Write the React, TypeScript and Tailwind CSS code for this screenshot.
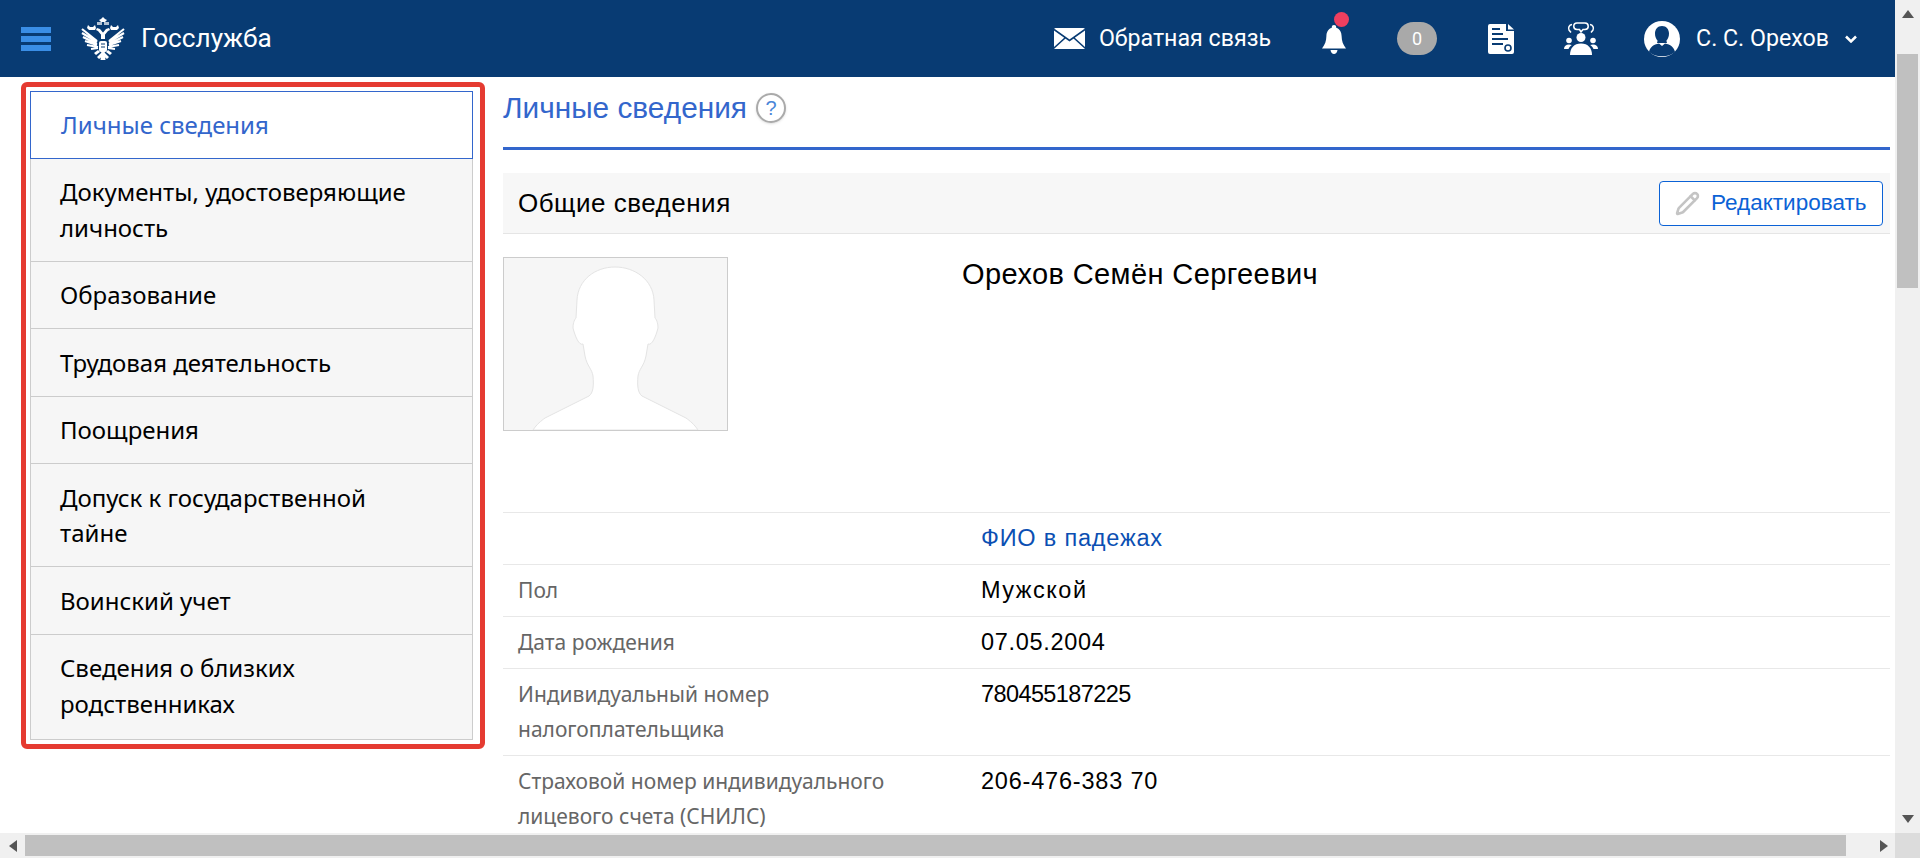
import { Pencil } from 'lucide-react'

const menu = [
  'Личные сведения',
  'Документы, удостоверяющие личность',
  'Образование',
  'Трудовая деятельность',
  'Поощрения',
  'Допуск к государственной тайне',
  'Воинский учет',
  'Сведения о близких родственниках',
]

const rows = [
  { label: 'Пол', value: 'Мужской', track: 'tracking-[1.5px]' },
  { label: 'Дата рождения', value: '07.05.2004', track: 'tracking-[0.7px]' },
  { label: 'Индивидуальный номер налогоплательщика', value: '780455187225', track: 'tracking-[-0.6px]' },
  { label: 'Страховой номер индивидуального лицевого счета (СНИЛС)', value: '206-476-383 70', track: 'tracking-[0.8px]' },
]

function EagleHalf() {
  return (
    <g>
      <path d="M16 24L1 12M16 25L1 16M16 27L2 20M16 28L4 24M17 30L6 28M17 31L10 32" stroke="#fff" strokeWidth="2.2" fill="none" />
      <path d="M22 22v-2l-5-6-2-1 1-2 3 1 5 6v4z" fill="#fff" />
      <path d="M7 8l2 2h3l2-2 1 3-1 2H8l-2-2z" fill="#fff" />
      <path d="M16 5h5v3h-5z" fill="#fff" opacity="0.7" />
      <path d="M21 35l-5 5 2 2 4-3zM17 33l-4 3 2 2 4-3z" fill="#fff" />
    </g>
  )
}

function Eagle() {
  return (
    <svg width="44" height="44" viewBox="0 0 44 44">
      <EagleHalf />
      <g transform="translate(44 0) scale(-1 1)">
        <EagleHalf />
      </g>
      <path d="M20 5h4l2-2-2-1-2-2-2 2-2 1z" fill="#fff" />
      <rect x="18" y="24" width="8" height="11" rx="2" fill="#fff" />
      <path d="M20 27h4M20 30h4" stroke="#083b73" strokeWidth="1" />
      <path d="M20.5 35h3l1 8h-5z" fill="#fff" />
    </svg>
  )
}

function Envelope() {
  return (
    <svg width="31" height="21" viewBox="0 0 31 21">
      <rect width="31" height="21" rx="1.5" fill="#fff" />
      <path d="M0 1.5l15.5 11L31 1.5M0 20l11-10M31 20L20 10" stroke="#083b73" strokeWidth="1.6" fill="none" />
    </svg>
  )
}

function Bell() {
  return (
    <svg width="24" height="29" viewBox="0 0 24 29" fill="#fff">
      <path d="M12 0c1.4 0 2.2.9 2.2 2.2v.6C18 4 19.5 7.5 19.6 11c.1 5 1.4 8.5 4.4 12.5H0C3 19.5 4.300 16 4.400 11 4.500 7.500 6 4 9.800 2.800v-.6C9.800.9 10.600 0 12 0z" />
      <path d="M8.500 25h7c-.4 2.400-1.800 4-3.500 4s-3.100-1.600-3.500-4z" />
    </svg>
  )
}

function DocIcon() {
  return (
    <svg width="26" height="30" viewBox="0 0 26 30">
      <path d="M2 0h16v7h8v21a2 2 0 0 1-2 2H2a2 2 0 0 1-2-2V2a2 2 0 0 1 2-2z" fill="#fff" />
      <path d="M20 0l6 5.500h-6z" fill="#fff" />
      <path d="M4 5h8M4 10h11M4 15h16M4 20h11" stroke="#083b73" strokeWidth="1.800" />
      <circle cx="20" cy="24" r="3" fill="#fff" stroke="#083b73" strokeWidth="1.600" />
    </svg>
  )
}

function PeopleIcon() {
  return (
    <svg width="34" height="33" viewBox="0 0 34 33" fill="#fff">
      <circle cx="17" cy="15.500" r="4.500" />
      <path d="M6 33c0-7 4-11.500 11-11.500S28 26 28 33z" />
      <circle cx="5" cy="18.500" r="2.800" />
      <circle cx="29" cy="18.500" r="2.800" />
      <path d="M0 27c0-3 2-4.500 5-4.500 1 0 2 .2 2.800.6C6 24.500 5 26 4.500 27zM34 27c0-3-2-4.500-5-4.500-1 0-2 .2-2.800.6 1.800 1.400 2.800 2.900 3.300 3.900z" />
      <path d="M13 1h8a2.500 2.500 0 0 1 0 6.500h-2l-2 2.500-1.500-2.500H13A2.500 2.500 0 0 1 13 1z" fill="none" stroke="#fff" strokeWidth="1.500" />
      <path d="M8 2.500C5 3 4 6 5 8l2 2.500M26 2.500c3 .5 4 3.500 3 5.500l-2 2.500" fill="none" stroke="#fff" strokeWidth="1.500" />
    </svg>
  )
}

function AvatarIcon() {
  return (
    <svg width="36" height="36" viewBox="0 0 36 36">
      <circle cx="18" cy="18" r="18" fill="#fff" />
      <path d="M18 5c-4.500 0-7 3.500-7 7.500 0 3 1 5.500 2.600 7.300l-.6 2.200H23l-.6-2.200C24 18 25 15.500 25 12.500 25 8.500 22.500 5 18 5z" fill="#083b73" />
      <path d="M5 31c1-5 4.500-7.500 10-8.500l3 2.500 3-2.500c5.500 1 9 3.500 10 8.500-3 2.800-7.500 4.300-13 4.300S8 33.800 5 31z" fill="#083b73" />
    </svg>
  )
}

function Silhouette() {
  return (
    <svg width="223" height="172" viewBox="0 0 223 172" className="block">
      <path
        d="M29 172C33 166 37 163 41 160L85 138C89 135 90 128 89 118C88 111 83 108 81 98L79 86C75 88 71 78 69 70C69 64 71 61 72 60L73 42C74 22 91 9 111 9C131 9 149 22 150 42L151 60C152 61 154 64 154 70C152 78 148 88 144 86L142 98C140 108 135 111 134 118C133 128 134 135 138 138L182 160C186 163 190 166 194 172Z"
        fill="#fff"
        stroke="#e4e4e4"
      />
    </svg>
  )
}

function Arrow({ points }: { points: string }) {
  return (
    <svg width="12" height="12" viewBox="0 0 12 12" fill="#555">
      <polygon points={points} />
    </svg>
  )
}

export default function App() {
  return (
    <div className="flex h-[858px] w-[1920px] flex-col overflow-hidden bg-white font-['Liberation_Sans',sans-serif]">
      <div className="flex min-h-0 flex-1">
        <div className="min-w-0 flex-1 overflow-hidden">
          <header className="flex h-[77px] items-center bg-[#083b73] pl-[21px] pr-[38px] font-['Roboto',sans-serif] text-white">
            <div className="flex w-[30px] flex-col gap-[3px]">
              <div className="h-[6px] bg-[#3a8ee6]" />
              <div className="h-[6px] bg-[#3a8ee6]" />
              <div className="h-[6px] bg-[#3a8ee6]" />
            </div>
            <div className="ml-[30px]">
              <Eagle />
            </div>
            <span className="ml-4 text-[26.2px]">Госслужба</span>
            <div className="ml-auto flex items-center">
              <Envelope />
              <span className="ml-[14px] text-[23.2px]">Обратная связь</span>
              <div className="relative ml-[51px] mt-[1px]">
                <Bell />
                <span className="absolute left-[12px] top-[-13px] h-[15px] w-[15px] rounded-full bg-[#ee3f5f]" />
              </div>
              <span className="ml-[51px] flex h-[33px] w-[40px] items-center justify-center rounded-full bg-[#a9a9a9] text-[18px]">0</span>
              <div className="ml-[51px]">
                <DocIcon />
              </div>
              <div className="ml-[50px]">
                <PeopleIcon />
              </div>
              <div className="ml-[46px]">
                <AvatarIcon />
              </div>
              <span className="ml-4 text-[23.2px]">С. С. Орехов</span>
              <svg className="ml-4" width="12" height="8" viewBox="0 0 12 8" fill="none" stroke="#fff" strokeWidth="2.500">
                <path d="M1 1.500l5 5 5-5" />
              </svg>
            </div>
          </header>

          <main className="flex gap-[18px] pl-[21px] pr-[5px]">
            <div className="mt-[5px] h-fit w-[464px] shrink-0 rounded-[6px] border-[5px] border-[#e53b31] pb-1 pl-1 pr-[7px] pt-1">
              <div className="border border-[#ccc] bg-[#f6f6f6] font-['Noto_Sans',sans-serif] text-[24px] leading-[35.5px]">
                {menu.map((item, i) => (
                  <div
                    key={item}
                    className={
                      i === 0
                        ? 'm-[-1px] mb-0 border border-[#3366cc] bg-white py-[15px] pl-[30px] pr-[40px] text-[#3366cc]'
                        : 'border-b border-[#ccc] py-[15.5px] pl-[29px] pr-[40px] text-black last:border-b-0 last:pb-[18px]'
                    }
                  >
                    {item}
                  </div>
                ))}
              </div>
            </div>

            <div className="min-w-0 flex-1">
              <div className="mb-[23px] flex items-center gap-[9px] border-b-[3px] border-[#3366cc] pb-5 pt-3">
                <span className="text-[29.8px] leading-[38px] text-[#3366cc]">Личные сведения</span>
                <span className="flex h-[30px] w-[30px] items-center justify-center rounded-full border-2 border-[#aaa] bg-white text-[20px] font-normal text-[#4a86d8] shadow-sm">?</span>
              </div>

              <div className="flex h-[61px] items-center justify-between border-b border-[#e5e5e5] bg-[#f7f7f7] pl-[15px] pr-[7px]">
                <span className="text-[26px] tracking-[0.5px] text-black">Общие сведения</span>
                <button className="flex h-[45px] w-[224px] items-center rounded-[4px] border border-[#0b62d6] bg-white pl-[15px] text-[22.5px] text-[#0b62d6]">
                  <Pencil size={25} color="#c4c4c4" strokeWidth={2.5} />
                  <span className="ml-[11px]">Редактировать</span>
                </button>
              </div>

              <div className="mt-[23px] flex h-[256px] border-b border-[#e8e8e8]">
                <div className="h-[174px] w-[225px] border border-[#ccc] bg-[#f6f6f6]">
                  <Silhouette />
                </div>
                <div className="ml-[234px] mt-[-2px] text-[29px] leading-[38px] tracking-[0.4px] text-black">Орехов Семён Сергеевич</div>
              </div>

              <div className="grid grid-cols-[478px_1fr] border-b border-[#e8e8e8] py-[8px] text-[23.5px] leading-[35px] tracking-[0.8px]">
                <div />
                <a className="text-[#0b4fb3]">ФИО в падежах</a>
              </div>

              {rows.map(row => (
                <div key={row.label} className="grid grid-cols-[478px_1fr] border-b border-[#e8e8e8] py-[8px] leading-[35px]">
                  <div className="w-[400px] pl-[15px] font-['Noto_Sans',sans-serif] text-[21px] text-[#666]">{row.label}</div>
                  <div className={`text-[23.5px] text-black ${row.track}`}>{row.value}</div>
                </div>
              ))}
            </div>
          </main>
        </div>

        <div className="flex w-[25px] shrink-0 flex-col items-center bg-[#f0f0f0] pl-[2px] pr-[2px]">
          <div className="flex h-[54px] items-start pt-2">
            <Arrow points="6,2 12,10 0,10" />
          </div>
          <div className="h-[234px] w-[21px] bg-[#c0c0c0]" />
          <div className="mt-auto pb-2">
            <Arrow points="0,2 12,2 6,10" />
          </div>
        </div>
      </div>

      <div className="flex h-[25px] shrink-0 bg-[#f0f0f0]">
        <div className="flex w-[25px] items-center justify-center">
          <Arrow points="2,6 10,0 10,12" />
        </div>
        <div className="mt-[2px] h-[21px] w-[1821px] bg-[#c0c0c0]" />
        <div className="flex w-[49px] items-center justify-end pr-[5px]">
          <Arrow points="2,0 10,6 2,12" />
        </div>
        <div className="w-[25px] bg-[#dcdcdc]" />
      </div>
    </div>
  )
}
